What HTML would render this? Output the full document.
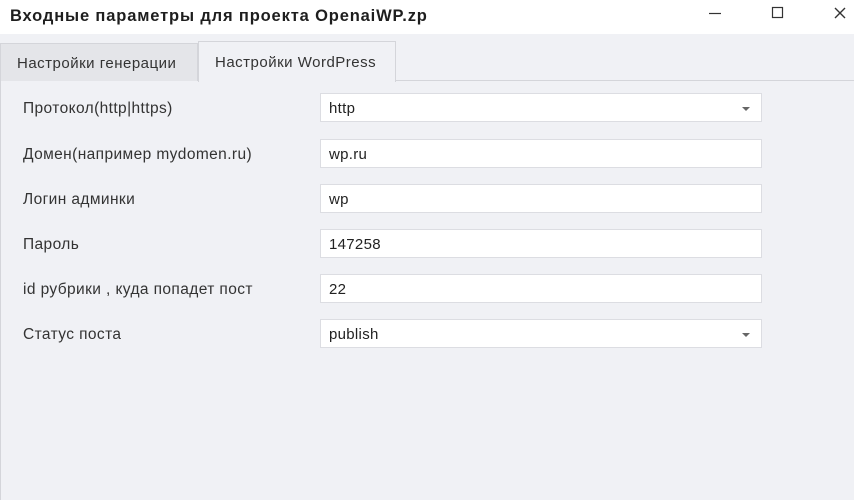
<!DOCTYPE html>
<html><head><meta charset="utf-8"><style>
*{margin:0;padding:0;box-sizing:border-box}
body{width:854px;height:500px;background:#f0f1f5;font-family:"Liberation Sans",sans-serif;color:#222;position:relative;overflow:hidden}
.title{position:absolute;left:0;top:0;width:854px;height:34px;background:#fff}
.title span{position:absolute;left:10px;top:7px;font-size:16.5px;font-weight:bold;color:#1e1e1e;letter-spacing:0.85px}
.tab{position:absolute;font-size:15px;color:#333;letter-spacing:0.5px}
.t1{left:0;top:43px;width:198px;height:38px;background:#e4e5e9;border:1px solid #d4d5da;border-bottom:none;padding:11px 0 0 16px}
.t2{left:198px;top:41px;width:198px;height:41px;background:#f0f1f5;border:1px solid #d4d5da;border-bottom:none;padding:12px 0 0 16px}
.line{position:absolute;left:396px;top:80px;width:458px;height:1px;background:#d4d5da}
.lb{position:absolute;left:0;top:81px;width:1px;height:419px;background:#d4d5da}
.lab{position:absolute;left:23px;font-size:15.5px;color:#333;letter-spacing:0.4px}
.in{position:absolute;left:320px;width:442px;height:29px;background:#fff;border:1px solid #dcdde2;font-size:15px;padding:6px 0 0 8px;color:#222;letter-spacing:0.3px}
.arr{position:absolute;right:11px;top:13px;width:0;height:0;border-left:4px solid transparent;border-right:4px solid transparent;border-top:4px solid #666}
</style></head><body>
<div class="title"><span>Входные параметры для проекта OpenaiWP.zp</span>
<svg style="position:absolute;left:0;top:0" width="854" height="34"><line x1="709" y1="13.5" x2="721" y2="13.5" stroke="#333" stroke-width="1.2"/><rect x="772.5" y="7.5" width="10" height="10" fill="none" stroke="#333" stroke-width="1.2"/><path d="M835 8L845 18M845 8L835 18" stroke="#333" stroke-width="1.4"/></svg></div>
<div class="tab t1">Настройки генерации</div>
<div class="tab t2">Настройки WordPress</div>
<div class="line"></div><div class="lb"></div>
<div class="lab" style="top:100px">Протокол(http|https)</div><div class="in" style="top:93px">http<div class="arr"></div></div>
<div class="lab" style="top:146px">Домен(например mydomen.ru)</div><div class="in" style="top:139px">wp.ru</div>
<div class="lab" style="top:191px">Логин админки</div><div class="in" style="top:184px">wp</div>
<div class="lab" style="top:236px">Пароль</div><div class="in" style="top:229px">147258</div>
<div class="lab" style="top:281px">id рубрики , куда попадет пост</div><div class="in" style="top:274px">22</div>
<div class="lab" style="top:326px">Статус поста</div><div class="in" style="top:319px">publish<div class="arr"></div></div>
</body></html>
